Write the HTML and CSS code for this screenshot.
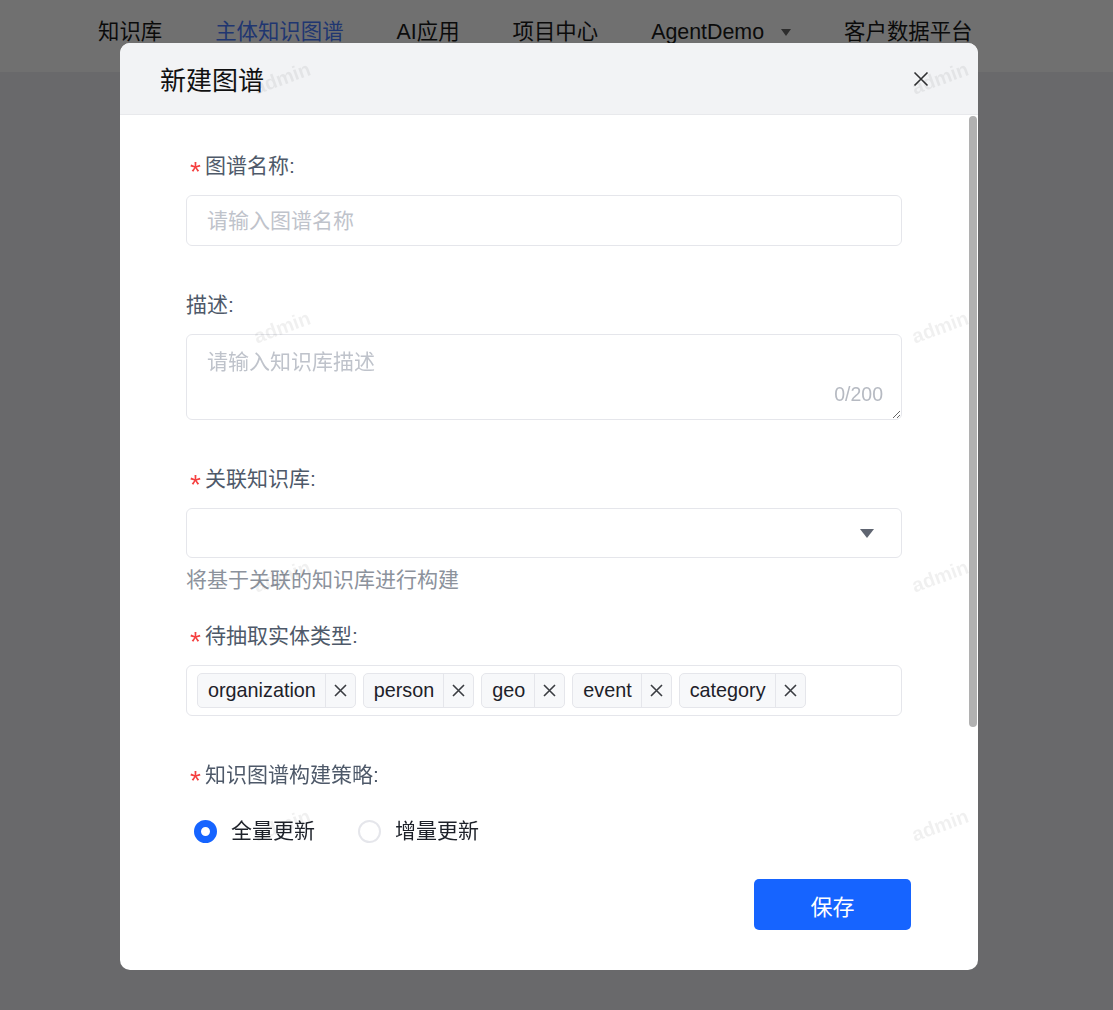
FILE: index.html
```html
<!DOCTYPE html>
<html lang="zh-CN">
  <head>
    <meta charset="UTF-8" />
    <meta name="viewport" content="width=device-width, initial-scale=1.0" />
    <title>新建图谱</title>
    <link rel="stylesheet" href="styles.css">
  </head>
  <body>
    <nav class="topnav">
      <a class="nav-item">知识库</a>
      <a class="nav-item active">主体知识图谱</a>
      <a class="nav-item">AI应用</a>
      <a class="nav-item">项目中心</a>
      <a class="nav-item">AgentDemo <span class="nav-caret"></span></a>
      <a class="nav-item">客户数据平台</a>
    </nav>

    <div class="mask">
      <div class="dialog">
        <div class="dialog-header">
          <h2 class="dialog-title">新建图谱</h2>
          <button class="dialog-close" aria-label="关闭">
            <svg width="16" height="16" viewBox="0 0 16 16">
              <path d="M1.5 1.5 L14.5 14.5 M14.5 1.5 L1.5 14.5" stroke="#303133" stroke-width="1.6" fill="none" />
            </svg>
          </button>
        </div>

        <div class="dialog-body">
          <div class="body-content">
            <div class="field">
              <div class="field-label"><span class="req">*</span>图谱名称:</div>
              <input class="text-input" type="text" placeholder="请输入图谱名称" />
            </div>

            <div class="field">
              <div class="field-label">描述:</div>
              <div class="textarea-wrap">
                <textarea class="text-area" placeholder="请输入知识库描述"></textarea>
                <span class="counter">0/200</span>
              </div>
            </div>

            <div class="field field-help">
              <div class="field-label"><span class="req">*</span>关联知识库:</div>
              <div class="select-box">
                <span class="select-caret"></span>
              </div>
              <div class="help-text">将基于关联的知识库进行构建</div>
            </div>

            <div class="field">
              <div class="field-label"><span class="req">*</span>待抽取实体类型:</div>
              <div class="tags-box">
                <span class="tag"><span class="tag-text">organization</span><span class="tag-close"><svg width="13" height="13" viewBox="0 0 13 13"><path d="M1 1 L12 12 M12 1 L1 12" /></svg></span></span>
                <span class="tag"><span class="tag-text">person</span><span class="tag-close"><svg width="13" height="13" viewBox="0 0 13 13"><path d="M1 1 L12 12 M12 1 L1 12" /></svg></span></span>
                <span class="tag"><span class="tag-text">geo</span><span class="tag-close"><svg width="13" height="13" viewBox="0 0 13 13"><path d="M1 1 L12 12 M12 1 L1 12" /></svg></span></span>
                <span class="tag"><span class="tag-text">event</span><span class="tag-close"><svg width="13" height="13" viewBox="0 0 13 13"><path d="M1 1 L12 12 M12 1 L1 12" /></svg></span></span>
                <span class="tag"><span class="tag-text">category</span><span class="tag-close"><svg width="13" height="13" viewBox="0 0 13 13"><path d="M1 1 L12 12 M12 1 L1 12" /></svg></span></span>
              </div>
            </div>

            <div class="field field-last">
              <div class="field-label"><span class="req">*</span>知识图谱构建策略:</div>
              <div class="radio-group">
                <label class="radio"><span class="radio-dot checked"></span>全量更新</label>
                <label class="radio"><span class="radio-dot"></span>增量更新</label>
              </div>
            </div>
          </div>
          <div class="scrollbar"><div class="scroll-thumb"></div></div>
        </div>

        <div class="dialog-footer">
          <button class="btn-primary">保存</button>
        </div>

        <div class="watermarks">
          <span>admin</span><span>admin</span>
          <span>admin</span><span>admin</span>
          <span>admin</span><span>admin</span>
          <span>admin</span><span>admin</span>
        </div>
      </div>
    </div>
  </body>
</html>
```

FILE: styles.css
```css
* {
  box-sizing: border-box;
}

body {
  margin: 0;
  font-family: "Liberation Sans", "Noto Sans CJK SC", sans-serif;
  background: #eef0f3;
  height: 100vh;
  overflow: hidden;
}

/* top navigation (under the mask) */
.topnav {
  height: 72px;
  background: #fff;
  display: flex;
  align-items: flex-start;
  gap: 53px;
  padding: 17px 0 0 98px;
  font-size: 21.4px;
  line-height: 30px;
  color: #1a1a1a;
}

.nav-item {
  display: flex;
  align-items: center;
}

.nav-item.active {
  color: #4a7cff;
}

.nav-caret {
  display: inline-block;
  margin-left: 17px;
  border-left: 5px solid transparent;
  border-right: 5px solid transparent;
  border-top: 7px solid #666;
}

.mask {
  position: fixed;
  top: 0;
  left: 0;
  right: 0;
  bottom: 0;
  background: rgba(0, 0, 0, 0.56);
  padding: 43px 0 0 120px;
}

.dialog {
  position: relative;
  width: 858px;
  height: 927px;
  background: #fff;
  border-radius: 10px;
  overflow: hidden;
  display: flex;
  flex-direction: column;
}

.dialog-header {
  height: 72px;
  flex: none;
  background: #f2f3f5;
  border-bottom: 1px solid #e8e9ec;
  display: flex;
  align-items: center;
  justify-content: space-between;
  padding: 0 49px 0 40px;
}

.dialog-title {
  margin: 0;
  font-size: 26px;
  font-weight: normal;
  color: #111;
}

.dialog-close {
  border: none;
  background: none;
  padding: 0;
  width: 16px;
  height: 16px;
  display: flex;
}

.dialog-body {
  height: 745px;
  flex: none;
  display: flex;
  overflow: hidden;
}

.body-content {
  flex: 1;
  padding: 38px 66px 0 66px;
}

/* drawn scrollbar, the dialog body is scrolled to top */
.scrollbar {
  width: 10px;
  padding: 1px;
}

.scroll-thumb {
  height: 611px;
  background: #b1b1b1;
  border-radius: 4px;
}

.field {
  margin-bottom: 46px;
}

.field-help {
  margin-bottom: 30px;
}

.field-last {
  margin-bottom: 0;
}

.field-label {
  display: flex;
  align-items: flex-start;
  font-size: 21px;
  line-height: 26px;
  height: 26px;
  color: #4e5969;
  margin-bottom: 16px;
}

.req {
  color: #f53f3f;
  font-size: 28px;
  line-height: 26px;
  position: relative;
  top: 6px;
  margin: 0 4px 0 4px;
}

.text-input {
  display: block;
  width: 100%;
  height: 51px;
  border: 1px solid #e5e6eb;
  border-radius: 6px;
  padding: 0 20px;
  font-family: inherit;
  font-size: 21px;
  color: #1d2129;
  outline: none;
}

.text-input::placeholder,
.text-area::placeholder {
  color: #bfc3cb;
}

.textarea-wrap {
  position: relative;
}

.text-area {
  display: block;
  width: 100%;
  height: 86px;
  border: 1px solid #e5e6eb;
  border-radius: 6px;
  padding: 12px 20px;
  font-family: inherit;
  font-size: 21px;
  line-height: 30px;
  resize: vertical;
  outline: none;
}

.counter {
  position: absolute;
  right: 19px;
  bottom: 15px;
  font-size: 19.5px;
  line-height: 22px;
  color: #b6bac2;
}

.select-box {
  height: 50px;
  border: 1px solid #e5e6eb;
  border-radius: 6px;
  display: flex;
  align-items: center;
  justify-content: flex-end;
  padding-right: 27px;
}

.select-caret {
  border-left: 7px solid transparent;
  border-right: 7px solid transparent;
  border-top: 9px solid #5f6571;
}

.help-text {
  margin-top: 9px;
  font-size: 21px;
  line-height: 26px;
  color: #8c929c;
}

.tags-box {
  height: 51px;
  border: 1px solid #e5e6eb;
  border-radius: 6px;
  display: flex;
  align-items: center;
  gap: 7px;
  padding: 0 10px;
}

.tag {
  display: flex;
  align-items: center;
  height: 35px;
  background: #f7f8fa;
  border: 1px solid #e5e6eb;
  border-radius: 5px;
}

.tag-text {
  padding: 0 9px 0 10px;
  font-size: 19.8px;
  color: #1d2129;
}

.tag-close {
  width: 30px;
  height: 100%;
  border-left: 1px solid #e5e6eb;
  display: flex;
  align-items: center;
  justify-content: center;
}

.tag-close svg {
  display: block;
  stroke: #3a3d42;
  stroke-width: 1.6;
  fill: none;
}

.radio-group {
  display: flex;
  gap: 43px;
  padding: 12px 0 0 8px;
}

.radio {
  display: flex;
  align-items: center;
  font-size: 21px;
  line-height: 30px;
  color: #1d2129;
}

.radio-dot {
  width: 23px;
  height: 23px;
  border-radius: 50%;
  border: 2px solid #e5e6eb;
  background: #fff;
  margin-right: 14px;
}

.radio-dot.checked {
  border: 7.5px solid #1664ff;
  background: #fff;
}

.dialog-footer {
  flex: 1;
  display: flex;
  justify-content: flex-end;
  align-items: flex-start;
  padding: 19px 67px 0 0;
}

.btn-primary {
  width: 157px;
  height: 51px;
  border: none;
  border-radius: 5px;
  background: #1664ff;
  color: #fff;
  font-family: inherit;
  font-size: 22px;
}

/* watermark layer over the dialog */
.watermarks {
  position: absolute;
  top: 0;
  left: 0;
  right: 0;
  bottom: 0;
  pointer-events: none;
  display: grid;
  grid-template-columns: 658px 60px;
  grid-auto-rows: 249px;
  padding: 25px 0 0 132px;
}

.watermarks span {
  width: 60px;
  height: 20px;
  line-height: 20px;
  text-align: center;
  font-size: 20px;
  font-weight: bold;
  color: rgba(0, 0, 0, 0.06);
  transform: rotate(-20deg);
}
```
